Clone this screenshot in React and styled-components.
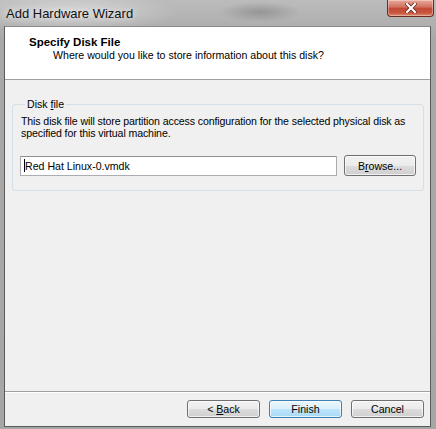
import React from 'react'
import styled, { createGlobalStyle } from 'styled-components'

const GlobalStyle = createGlobalStyle`
  html, body {
    margin: 0;
    padding: 0;
    background: #a9a9a9;
  }
  body {
    font-family: "Liberation Sans", Arial, sans-serif;
    font-size: 10.6px;
    color: #000;
  }
`

const Frame = styled.div`
  width: 436px;
  height: 429px;
  box-sizing: border-box;
  display: flex;
  flex-direction: column;
  padding: 0 5px 2px 4px;
  background:
    radial-gradient(ellipse 40px 10px at 260px 12px, rgba(90, 90, 90, 0.35), transparent),
    radial-gradient(ellipse 110px 20px at 70px 12px, rgba(235, 235, 235, 0.6), transparent),
    linear-gradient(#bcbcbc, #a8a8a8 40px, #a6a6a6);
`

const TitleBar = styled.div`
  height: 26px;
  flex-shrink: 0;
  position: relative;
  display: flex;
  align-items: center;
  padding-left: 2px;
  font-size: 13px;
  color: #111;
  text-shadow: 0 0 6px rgba(255, 255, 255, 0.9);
`

const CloseButton = styled.div`
  position: absolute;
  top: 0;
  right: -3px;
  width: 47px;
  height: 17px;
  box-sizing: border-box;
  border: 1px solid #6b2a22;
  border-top: none;
  border-radius: 0 0 4px 4px;
  background: linear-gradient(#e8a89a, #d2705e 45%, #c14a36 50%, #c9553e 80%, #d98a6e);
  box-shadow: inset 0 0 0 1px rgba(255, 255, 255, 0.35);
  display: flex;
  align-items: center;
  justify-content: center;
`

const Client = styled.div`
  flex: 1;
  display: flex;
  flex-direction: column;
  border: 1px solid #5a5a5a;
  border-top-color: #8a8a8a;
  background: #f0f0f0;
`

const Header = styled.div`
  height: 53px;
  flex-shrink: 0;
  box-sizing: border-box;
  background: #fff;
  border-bottom: 1px solid #a0a0a0;
  padding: 8px 0 0 24px;
`

const HeaderTitle = styled.div`
  font-weight: bold;
  font-size: 11.5px;
  line-height: 14px;
`

const HeaderSub = styled.div`
  padding-left: 24px;
  line-height: 13px;
`

const Body = styled.div`
  flex: 1;
  padding: 18px 6px 0 7px;
`

const GroupBox = styled.fieldset`
  margin: 0;
  border: 1px solid #d5dfe5;
  border-radius: 3px;
  padding: 0 6px 12px 7px;
  height: 93px;
  box-sizing: border-box;
`

const Legend = styled.legend`
  padding: 0 2px;
  margin-left: 5px;
  line-height: 12px;
`

const Description = styled.p`
  margin: 5px 0 0 1px;
  line-height: 12px;
  letter-spacing: -0.12px;
`

const FileRow = styled.div`
  display: flex;
  align-items: center;
  gap: 7px;
  margin-top: 16px;
`

const Field = styled.div`
  width: 317px;
  height: 20px;
  box-sizing: border-box;
  border: 1px solid #abadb3;
  border-top-color: #8e8f8f;
  background: #fff;
  display: flex;
  align-items: center;
  padding-left: 3px;
`

const Caret = styled.span`
  display: inline-block;
  width: 1px;
  height: 13px;
  background: #000;
`

const Button = styled.button`
  width: ${p => p.$w || 73}px;
  height: ${p => p.$h || 18}px;
  padding: 0;
  box-sizing: border-box;
  font-family: inherit;
  font-size: 10.6px;
  color: #000;
  border: 1px solid ${p => (p.$default ? '#3c7fb1' : '#707070')};
  border-radius: 3px;
  background: ${p =>
    p.$default
      ? 'linear-gradient(#eaf6fd, #d9f0fc 50%, #bee6fd 50%, #a7d9f5)'
      : 'linear-gradient(#f2f2f2, #ebebeb 50%, #dddddd 50%, #cfcfcf)'};
  box-shadow: inset 0 0 0 1px rgba(255, 255, 255, 0.7);
`

const Key = styled.span`
  text-decoration: underline;
`

const Footer = styled.div`
  flex-shrink: 0;
  border-top: 1px solid #a0a0a0;
  box-shadow: inset 0 1px 0 #fff;
  height: 35px;
  box-sizing: border-box;
  display: flex;
  justify-content: flex-end;
  align-items: flex-start;
  gap: 9px;
  padding: 8px 6px 0 0;
`

export default function App() {
  return (
    <Frame>
      <GlobalStyle />
      <TitleBar>
        Add Hardware Wizard
        <CloseButton>
          <svg width="12" height="10" viewBox="0 0 12 10">
            <path d="M2 1 L10 9 M10 1 L2 9" stroke="#5a2018" strokeWidth="3.6" strokeLinecap="square" />
            <path d="M2 1 L10 9 M10 1 L2 9" stroke="#fff" strokeWidth="2.2" strokeLinecap="square" />
          </svg>
        </CloseButton>
      </TitleBar>
      <Client>
        <Header>
          <HeaderTitle>Specify Disk File</HeaderTitle>
          <HeaderSub>Where would you like to store information about this disk?</HeaderSub>
        </Header>
        <Body>
          <GroupBox>
            <Legend>Disk <Key>f</Key>ile</Legend>
            <Description>
              This disk file will store partition access configuration for the selected physical disk as
              specified for this virtual machine.
            </Description>
            <FileRow>
              <Field>
                <Caret />
                Red Hat Linux-0.vmdk
              </Field>
              <Button $w={72} $h={21}>
                B<Key>r</Key>owse...
              </Button>
            </FileRow>
          </GroupBox>
        </Body>
        <Footer>
          <Button>
            &lt; <Key>B</Key>ack
          </Button>
          <Button $default>Finish</Button>
          <Button>Cancel</Button>
        </Footer>
      </Client>
    </Frame>
  )
}
